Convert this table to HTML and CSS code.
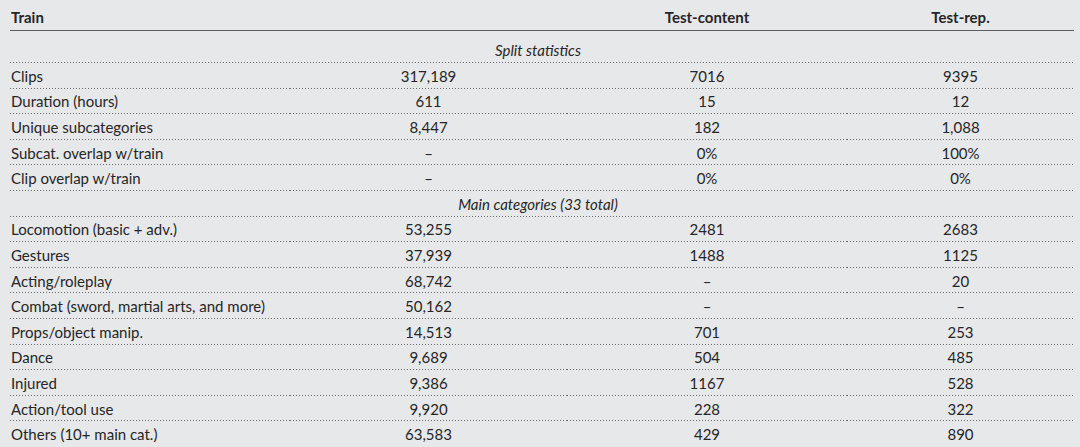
FILE: index.html
```html
<!DOCTYPE html>
<html>
<head>
<meta charset="utf-8">
<link rel="stylesheet" href="styles.css">
</head>
<body>
<div class="tbl">
  <div class="row head">
    <div class="c1">Train</div><div class="c"></div><div class="c">Test-content</div><div class="c">Test-rep.</div>
  </div>
  <div class="body">
    <div class="row sec"><div class="span">Split statistics</div></div>
    <div class="row"><div class="c1">Clips</div><div class="c">317,189</div><div class="c">7016</div><div class="c">9395</div></div>
    <div class="row"><div class="c1">Duration (hours)</div><div class="c">611</div><div class="c">15</div><div class="c">12</div></div>
    <div class="row"><div class="c1">Unique subcategories</div><div class="c">8,447</div><div class="c">182</div><div class="c">1,088</div></div>
    <div class="row"><div class="c1">Subcat. overlap w/train</div><div class="c">–</div><div class="c">0%</div><div class="c">100%</div></div>
    <div class="row"><div class="c1">Clip overlap w/train</div><div class="c">–</div><div class="c">0%</div><div class="c">0%</div></div>
    <div class="row sec"><div class="span">Main categories (33 total)</div></div>
    <div class="row"><div class="c1">Locomotion (basic + adv.)</div><div class="c">53,255</div><div class="c">2481</div><div class="c">2683</div></div>
    <div class="row"><div class="c1">Gestures</div><div class="c">37,939</div><div class="c">1488</div><div class="c">1125</div></div>
    <div class="row"><div class="c1">Acting/roleplay</div><div class="c">68,742</div><div class="c">–</div><div class="c">20</div></div>
    <div class="row"><div class="c1">Combat (sword, martial arts, and more)</div><div class="c">50,162</div><div class="c">–</div><div class="c">–</div></div>
    <div class="row"><div class="c1">Props/object manip.</div><div class="c">14,513</div><div class="c">701</div><div class="c">253</div></div>
    <div class="row"><div class="c1">Dance</div><div class="c">9,689</div><div class="c">504</div><div class="c">485</div></div>
    <div class="row"><div class="c1">Injured</div><div class="c">9,386</div><div class="c">1167</div><div class="c">528</div></div>
    <div class="row"><div class="c1">Action/tool use</div><div class="c">9,920</div><div class="c">228</div><div class="c">322</div></div>
    <div class="row last"><div class="c1">Others (10+ main cat.)</div><div class="c">63,583</div><div class="c">429</div><div class="c">890</div></div>
  </div>
</div>
</body>
</html>
```
FILE: styles.css
```css
html, body {
  margin: 0;
  padding: 0;
  background: #e7e8ea;
}
body {
  font-family: Lato, "Open Sans", sans-serif;
  font-size: 15px;
  color: #262626;
  overflow: hidden;
}
.tbl {
  margin-left: 10px;
  width: 1064px;
}
.row {
  display: grid;
  grid-template-columns: 280px 277px 280px 227px;
  align-items: center;
  height: 25.6px;
}
.row > div {
  height: 100%;
  display: flex;
  align-items: center;
  background-image: linear-gradient(to right, #6a6a6a 1px, transparent 1px);
  background-size: 3px 1px;
  background-repeat: repeat-x;
  background-position: 0 100%;
}
.c1 {
  justify-content: flex-start;
  padding-left: 1px;
}
.c {
  justify-content: center;
}
.head {
  height: 30px;
  border-bottom: 1.5px solid #5e5e5e;
  font-weight: 700;
}
.head > div {
  background-image: none;
  padding-top: 4px;
  box-sizing: border-box;
}
.body {
  padding-top: 6.5px;
}
.sec .span {
  grid-column: 1 / -1;
  justify-content: center;
  font-style: italic;
  padding-right: 8px;
  box-sizing: border-box;
}
.last > div {
  background-image: none;
}
```
